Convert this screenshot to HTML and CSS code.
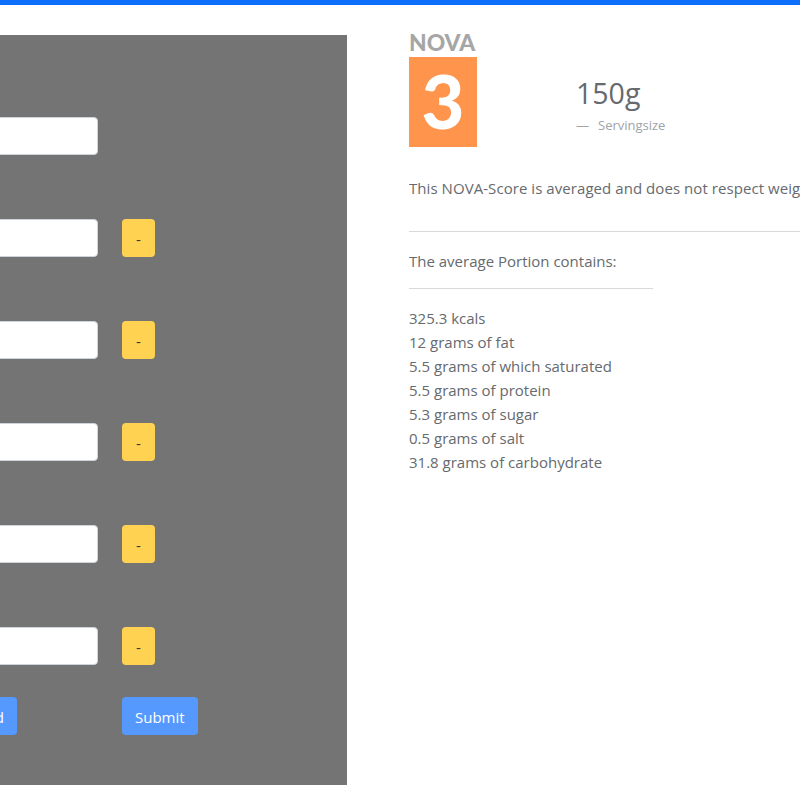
FILE: index.html
```html
<!DOCTYPE html>
<html lang="en">

<head>
    <meta charset="UTF-8">
    <meta name="viewport" content="width=device-width, initial-scale=1.0">
    <title>Recipe</title>
    <link rel="stylesheet" href="styles.css">
</head>

<body>
    <div class="topbar"></div>
    <div class="page">
        <form class="panel">
            <div class="row"><input class="field" type="text"></div>
            <div class="row"><input class="field" type="text"><button class="btn btn-remove" type="button">-</button></div>
            <div class="row"><input class="field" type="text"><button class="btn btn-remove" type="button">-</button></div>
            <div class="row"><input class="field" type="text"><button class="btn btn-remove" type="button">-</button></div>
            <div class="row"><input class="field" type="text"><button class="btn btn-remove" type="button">-</button></div>
            <div class="row"><input class="field" type="text"><button class="btn btn-remove" type="button">-</button></div>
            <div class="actions">
                <div class="add-slot"><button class="btn btn-primary" type="button">Add</button></div>
                <button class="btn btn-primary" type="submit">Submit</button>
            </div>
        </form>

        <div class="details">
            <div class="summary">
                <div class="nova">
                    <div class="nova-label">NOVA</div>
                    <div class="nova-score">3</div>
                </div>
                <div class="serving">
                    <div class="serving-size">150g</div>
                    <div class="serving-label"><span class="dash">—</span>Servingsize</div>
                </div>
            </div>
            <p class="note">This NOVA-Score is averaged and does not respect weights of the ingredients.</p>
            <hr class="rule">
            <p class="contains">The average Portion contains:</p>
            <hr class="rule rule-short">
            <ul class="facts">
                <li>325.3 kcals</li>
                <li>12 grams of fat</li>
                <li>5.5 grams of which saturated</li>
                <li>5.5 grams of protein</li>
                <li>5.3 grams of sugar</li>
                <li>0.5 grams of salt</li>
                <li>31.8 grams of carbohydrate</li>
            </ul>
        </div>
    </div>
</body>

</html>
```

FILE: styles.css
```css
html,
body {
    height: 100%;
}

body {
    margin: 0;
    overflow: hidden;
    background: #fff;
    color: #666a6e;
    font-family: "Open Sans", "Noto Sans", Arial, sans-serif;
    font-size: 15px;
    line-height: 24px;
}

.topbar {
    height: 5px;
    background: #0d6efd;
}

.page {
    display: flex;
    padding-top: 30px;
}

/* left form, cut off by the window edge */
.panel {
    flex: 0 0 347px;
    box-sizing: border-box;
    height: 750px;
    padding-top: 82px;
    overflow: hidden;
    background: #747474;
}

.row {
    display: flex;
    gap: 24px;
    height: 38px;
    margin-bottom: 64px;
}

.field {
    box-sizing: border-box;
    width: 118px;
    height: 38px;
    margin-left: -20px;
    border: 1px solid #ced4da;
    border-radius: 4px;
    background: #fff;
}

.btn {
    box-sizing: border-box;
    height: 38px;
    border: 1px solid transparent;
    border-radius: 4px;
    font-family: inherit;
    font-size: 15px;
    line-height: 24px;
}

.btn-remove {
    width: 33px;
    padding: 2px 0 0;
    background: #ffd351;
    color: #343a40;
}

.btn-primary {
    padding: 2px 12px 0;
    background: #5599ff;
    color: #fff;
}

.actions {
    display: flex;
    gap: 105px;
    margin-top: -32px;
}

.add-slot {
    display: flex;
    justify-content: flex-end;
    width: 17px;
}

.add-slot .btn {
    flex: none;
}

.details {
    flex: 1;
    min-width: 0;
    margin-top: -5px;
    margin-left: 62px;
    overflow: hidden;
}

.summary {
    display: flex;
    align-items: flex-start;
    padding-top: 3px;
}

.nova {
    width: 68px;
}

.nova-label {
    height: 24px;
    color: #a6a6a6;
    font-family: Lato, Arial, sans-serif;
    font-size: 22.8px;
    font-weight: 900;
    line-height: 18px;
    white-space: nowrap;
}

.nova-score {
    height: 90px;
    background: #ff954d;
    color: #fff;
    font-family: Lato, Arial, sans-serif;
    font-size: 74px;
    font-weight: 900;
    line-height: 87px;
    text-align: center;
}

.serving {
    margin-top: 41px;
    margin-left: 99px;
}

.serving-size {
    font-size: 28.5px;
    line-height: 38px;
}

.serving-label {
    margin-top: 3px;
    color: #a0a3a8;
    font-size: 13px;
    line-height: 20px;
}

.dash {
    margin-right: 9px;
}

.note {
    margin: 29px 0 0;
    letter-spacing: 0.06px;
    white-space: nowrap;
}

.rule {
    height: 1px;
    margin: 31px 0 0;
    border: 0;
    background: #d9d9d9;
}

.contains {
    margin: 17px 0 0;
}

.rule-short {
    width: 244px;
    margin-top: 15px;
}

.facts {
    margin: 17px 0 0;
    padding: 0;
    list-style: none;
}
```
